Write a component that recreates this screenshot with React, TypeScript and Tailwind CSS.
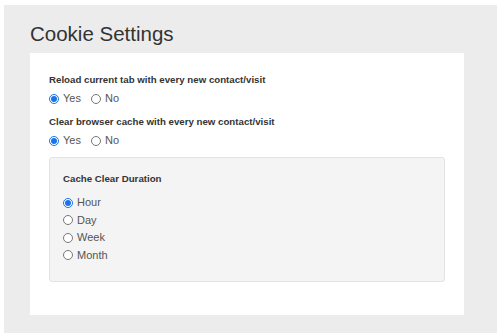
import { useState } from "react";

const Radio = ({
  name,
  label,
  checked,
  onChange,
}: {
  name: string;
  label: string;
  checked: boolean;
  onChange: () => void;
}) => (
  <label className="flex items-center gap-[4px] text-[11px] leading-[13px] text-[#555]">
    <input
      type="radio"
      name={name}
      checked={checked}
      onChange={onChange}
      className="m-0 h-[10px] w-[10px] accent-[#1a73e8]"
    />
    <span>{label}</span>
  </label>
);

const YesNo = ({ name, label }: { name: string; label: string }) => {
  const [value, setValue] = useState("yes");

  return (
    <div>
      <div className="text-[9.7px] font-bold leading-[12px] text-[#333]">
        {label}
      </div>
      <div className="mt-[6px] flex items-center gap-[10px]">
        <Radio
          name={name}
          label="Yes"
          checked={value === "yes"}
          onChange={() => setValue("yes")}
        />
        <Radio
          name={name}
          label="No"
          checked={value === "no"}
          onChange={() => setValue("no")}
        />
      </div>
    </div>
  );
};

const durations = ["Hour", "Day", "Week", "Month"];

export default function App() {
  const [duration, setDuration] = useState("Hour");

  return (
    <div
      className="h-[333px] bg-white pl-[4px] pr-[4px] pt-[5px]"
      style={{ fontFamily: '"Liberation Sans", Arial, sans-serif' }}
    >
      <div className="h-full bg-[#ececec] pl-[26px] pr-[33px] pt-[16px]">
        <h1 className="text-[20.5px] leading-[26px] text-[#333]">
          Cookie Settings
        </h1>
        <div className="mt-[6px] h-[262px] bg-white px-[19px] pt-[21px]">
          <div className="space-y-[11px]">
            <YesNo name="reload" label="Reload current tab with every new contact/visit" />
            <YesNo name="cache" label="Clear browser cache with every new contact/visit" />
          </div>
          <div className="mt-[10px] h-[125px] rounded-[3px] border border-[#e3e3e3] bg-[#f4f4f4] px-[13px] pt-[15px]">
            <div className="text-[9.7px] font-bold leading-[12px] text-[#333]">
              Cache Clear Duration
            </div>
            <div className="mt-[11px] flex flex-col gap-[4.5px]">
              {durations.map((d) => (
                <Radio
                  key={d}
                  name="duration"
                  label={d}
                  checked={duration === d}
                  onChange={() => setDuration(d)}
                />
              ))}
            </div>
          </div>
        </div>
      </div>
    </div>
  );
}
